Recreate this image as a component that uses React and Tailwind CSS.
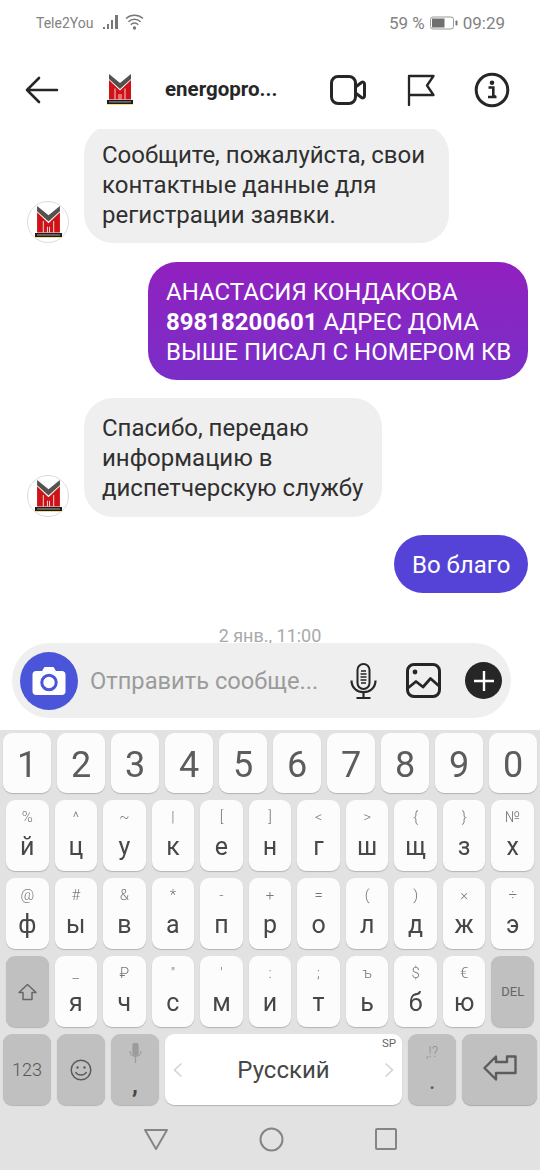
const Logo = ({ w = 26 }) => (
  <svg width={w} height={(w * 31) / 26} viewBox="0 0 26 31">
    <polygon points="2,0 13,9 24,0 24,5 13,15 2,5" fill="#55514f" />
    <polygon points="2,6 13,16.5 24,6 24,25.5 2,25.5" fill="#cf1118" />
    <path d="M8 25.5V14.5M18 25.5V14.5M12 25.5V20M14 25.5V20" fill="none" stroke="#fff" strokeWidth="0.8" />
    <rect x="0" y="26" width="26" height="4" fill="#1c1c1c" />
    <rect x="2" y="27.3" width="22" height="1.2" fill="#8a8a8a" />
    <rect x="0" y="30" width="26" height="1" fill="#f3e27a" />
  </svg>
);

const Avatar = () => (
  <div className="w-[42px] h-[42px] shrink-0 rounded-full border border-[#dcdcdc] bg-white flex items-center justify-center">
    <Logo w={27} />
  </div>
);

const Key = ({ top, main, children, gray, className = "" }) => (
  <div className={`relative flex-1 min-w-0 rounded-[9px] shadow-[0_1px_1px_#b4b4b4] flex flex-col items-center ${gray ? "bg-[#c0c0c0]" : "bg-[#fcfcfc]"} ${className}`}>
    {children}
    {top !== undefined && (
      <span className="h-[19px] mt-[8px] text-[15px] leading-[19px] font-light text-[#777] will-change-[opacity]">{top}</span>
    )}
    {main !== undefined && (
      <span className="mt-[5px] text-[25px] leading-[30px] text-[#474747] will-change-[opacity]">{main}</span>
    )}
  </div>
);

const rows = [
  [["%", "й"], ["^", "ц"], ["~", "у"], ["|", "к"], ["[", "е"], ["]", "н"], ["<", "г"], [">", "ш"], ["{", "щ"], ["}", "з"], ["№", "х"]],
  [["@", "ф"], ["#", "ы"], ["&", "в"], ["*", "а"], ["-", "п"], ["+", "р"], ["=", "о"], ["(", "л"], [")", "д"], ["×", "ж"], ["÷", "э"]],
];
const row4 = [["_", "я"], ["₽", "ч"], ['"', "с"], ["'", "м"], [":", "и"], [";", "т"], ["ъ", "ь"], ["$", "б"], ["€", "ю"]];

export default function App() {
  return (
    <div className="w-[540px] h-[1170px] bg-white overflow-hidden flex flex-col font-['Roboto',sans-serif]">
      {/* status */}
      <div className="h-[46px] shrink-0 flex items-center pl-[36px] text-[#828282]">
        <span className="text-[14px] leading-none">Tele2You</span>
        <svg className="ml-[10px]" width="41" height="20" viewBox="0 0 41 20">
          <rect x="0" y="14" width="2" height="2" fill="#777" />
          <rect x="4" y="11" width="2" height="5" fill="#777" />
          <rect x="8" y="7" width="2" height="9" fill="#777" />
          <rect x="12" y="2" width="3" height="14" fill="#777" />
          <path d="M23 5.5a13 13 0 0 1 17 0M25.4 8.7a9 9 0 0 1 12.2 0M27.8 11.7a5 5 0 0 1 7.4 0" fill="none" stroke="#777" strokeWidth="1.5" />
          <circle cx="31.5" cy="15" r="1.7" fill="#777" />
        </svg>
        <span className="ml-auto text-[17px] leading-none">59 %</span>
        <svg className="ml-[5px]" width="28" height="14" viewBox="0 0 28 14">
          <rect x="0.5" y="1" width="23" height="12" rx="2.5" fill="none" stroke="#999" />
          <rect x="2" y="2.5" width="12.5" height="9" fill="#6f6f6f" />
          <rect x="25.5" y="4.5" width="2" height="5" rx="0.8" fill="#777" />
        </svg>
        <span className="ml-[5px] mr-[35px] text-[17px] leading-none">09:29</span>
      </div>

      {/* header */}
      <div className="h-[83px] shrink-0 pt-[4px] flex items-center pl-[25px]">
        <svg width="34" height="28" viewBox="0 0 34 28" fill="none" stroke="#262626" strokeWidth="2.6" strokeLinecap="round" strokeLinejoin="round">
          <path d="M32 14H2M14 2L2 14L14 26" />
        </svg>
        <div className="ml-[48px] w-[26px]"><Logo w={26} /></div>
        <span className="ml-[32px] w-[165px] text-[20.5px] leading-none font-bold text-[#262626]">energopro...</span>
        <svg width="36" height="30" viewBox="0 0 36 30" fill="none" stroke="#262626" strokeWidth="3" strokeLinejoin="round">
          <rect x="1.5" y="1.5" width="24" height="27" rx="6.5" />
          <path d="M25.5 12L31.5 7.5C33 6.5 34.5 7.5 34.5 9V21C34.5 22.5 33 23.5 31.5 22.5L25.5 18" />
        </svg>
        <svg className="ml-[41px]" width="28" height="32" viewBox="0 0 28 32" fill="none" stroke="#262626" strokeWidth="2.3" strokeLinejoin="round" strokeLinecap="round">
          <path d="M2 31V2H26.5L20 11.5L26.5 21H2" />
        </svg>
        <svg className="ml-[39px]" width="36" height="36" viewBox="0 0 36 36" fill="none">
          <circle cx="18" cy="18" r="15.8" stroke="#262626" strokeWidth="3" />
          <circle cx="18" cy="10.8" r="2.3" fill="#262626" />
          <path d="M14.5 15.5H19.3V24.5H22M14 25H22.5" stroke="#262626" strokeWidth="2.6" />
        </svg>
      </div>

      {/* messages */}
      <div className="h-[514px] shrink-0 overflow-hidden flex flex-col justify-end text-[24px] leading-[30px]">
        <div className="flex items-end pl-[27px] gap-[15px] shrink-0">
          <Avatar />
          <div className="w-[365px] rounded-[29px] bg-[#efefef] px-[18px] pt-[15px] pb-[13px] text-[#303030] whitespace-nowrap">
            Сообщите, пожалуйста, свои<br />контактные данные для<br />регистрации заявки.
          </div>
        </div>
        <div className="self-end mr-[12px] mt-[19px] w-[380px] shrink-0 rounded-[29px] bg-gradient-to-b from-[#9120bf] to-[#7a2dc8] px-[18px] pt-[15px] pb-[13px] text-white whitespace-nowrap">
          АНАСТАСИЯ КОНДАКОВА<br /><b className="font-bold">89818200601</b> АДРЕС ДОМА<br />ВЫШЕ ПИСАЛ С НОМЕРОМ КВ
        </div>
        <div className="flex items-end pl-[27px] gap-[15px] mt-[18px] shrink-0">
          <Avatar />
          <div className="w-[298px] rounded-[29px] bg-[#efefef] px-[18px] pt-[15px] pb-[14px] text-[#303030] whitespace-nowrap">
            Спасибо, передаю<br />информацию в<br />диспетчерскую службу
          </div>
        </div>
        <div className="self-end mr-[12px] mt-[18px] w-[134px] shrink-0 rounded-[29px] bg-[#5543d7] px-[18px] pt-[15px] pb-[13px] text-white whitespace-nowrap">
          Во благо
        </div>
        <div className="mt-[32px] mb-[-4px] h-[22px] shrink-0 text-center text-[18px] leading-[22px] text-[#a9a9a9]">2 янв., 11:00</div>
      </div>

      {/* input */}
      <div className="relative ml-[12px] w-[499px] h-[75px] shrink-0 rounded-full bg-[#efefef] flex items-center pl-[8px]">
        <div className="w-[58px] h-[58px] rounded-full bg-[#4a55d9] flex items-center justify-center">
          <svg width="34" height="30" viewBox="0 0 34 30">
            <path d="M4 5H10L12.5 1H21.5L24 5H30C32 5 33.5 6.5 33.5 8.5V25.5C33.5 27.5 32 29 30 29H4C2 29 0.5 27.5 0.5 25.5V8.5C0.5 6.5 2 5 4 5Z" fill="#fff" />
            <circle cx="17" cy="16.5" r="7.2" fill="none" stroke="#4a55d9" strokeWidth="3" />
          </svg>
        </div>
        <span className="ml-[12px] mt-[2px] w-[260px] text-[23.7px] leading-none text-[#9b9b9b] whitespace-nowrap">Отправить сообще...</span>
        <svg width="27" height="36" viewBox="0 0 27 36" fill="none" stroke="#262626" strokeWidth="2">
          <rect x="7.5" y="1" width="12" height="25" rx="6" />
          <path d="M1.5 17.5C1.5 33 25.5 33 25.5 17.5M13.5 29V34.5M6.5 35H20.5" strokeWidth="2.2" />
          <path d="M11 8H16M10.5 11H16.5M10.5 14H16.5M10.5 17H16.5M11 20H16" strokeWidth="1.4" />
        </svg>
        <svg className="ml-[29px]" width="35" height="35" viewBox="0 0 35 35" fill="none" stroke="#262626" strokeWidth="3" strokeLinejoin="round">
          <rect x="1.5" y="1.5" width="32" height="32" rx="6.5" />
          <circle cx="9" cy="9" r="2.4" fill="#262626" stroke="none" />
          <path d="M2 25L10 18.5L17 24L24.5 15.5L33 23" strokeWidth="2.8" />
        </svg>
        <div className="ml-[24px] w-[37px] h-[37px] rounded-full bg-[#262626] flex items-center justify-center">
          <svg width="22" height="22" viewBox="0 0 22 22" stroke="#fff" strokeWidth="2.4"><path d="M11 1V21M1 11H21" /></svg>
        </div>
      </div>

      {/* keyboard */}
      <div className="mt-[12px] flex-1 bg-[#e2e2e2] flex flex-col">
        <div className="mt-[3px] h-[60px] px-[3px] flex gap-[6px]">
          {[1, 2, 3, 4, 5, 6, 7, 8, 9, 0].map((n) => (
            <Key key={n} className="justify-center pt-[3px]">
              <span className="text-[36px] leading-none text-[#5c5c5c] will-change-[opacity]">{n}</span>
            </Key>
          ))}
        </div>
        {rows.map((r, i) => (
          <div key={i} className="mt-[7px] h-[71px] px-[6px] flex gap-[6px]">
            {r.map(([t, m]) => <Key key={m} top={t} main={m} />)}
          </div>
        ))}
        <div className="mt-[7px] h-[71px] px-[6px] flex gap-[6px]">
          <Key gray className="justify-center">
            <svg width="19" height="18" viewBox="0 0 19 18" fill="none" stroke="#666" strokeWidth="1.5" strokeLinejoin="round"><path d="M9.5 1.5L18 9.5H14V16.5H5V9.5H1Z" /></svg>
          </Key>
          {row4.map(([t, m]) => <Key key={m} top={t} main={m} />)}
          <Key gray className="justify-center">
            <span className="text-[13px] leading-none text-[#666]">DEL</span>
          </Key>
        </div>
        <div className="mt-[7px] h-[71px] px-[3px] flex gap-[6px]">
          <Key gray className="justify-center">
            <span className="text-[18px] leading-none font-light text-[#555]">123</span>
          </Key>
          <Key gray className="justify-center">
            <svg width="22" height="22" viewBox="0 0 22 22" fill="none" stroke="#5c5c5c" strokeWidth="1.5">
              <circle cx="11" cy="11" r="9.8" />
              <circle cx="7.5" cy="8.5" r="1.2" fill="#5c5c5c" stroke="none" />
              <circle cx="14.5" cy="8.5" r="1.2" fill="#5c5c5c" stroke="none" />
              <path d="M5.5 13C7.5 17 14.5 17 16.5 13" />
            </svg>
          </Key>
          <Key gray>
            <svg className="mt-[9px]" width="13" height="20" viewBox="0 0 13 20" fill="none" stroke="#9c9c9c" strokeWidth="1.3">
              <rect x="4" y="0" width="5" height="12" rx="2.5" fill="#9c9c9c" />
              <path d="M1 8C1 15 12 15 12 8M6.5 14V20" />
            </svg>
            <span className="mt-[10px] text-[24px] leading-[24px] font-bold text-[#474747]">,</span>
          </Key>
          <div className="relative w-[237px] shrink-0 rounded-[9px] bg-white shadow-[0_1px_1px_#b4b4b4] flex items-center justify-between px-[8px]">
            <svg width="10" height="16" viewBox="0 0 10 16" fill="none" stroke="#d2d2d2" strokeWidth="1.5"><path d="M8.5 1.5L1.5 8L8.5 14.5" /></svg>
            <span className="text-[24px] leading-none text-[#474747]">Русский</span>
            <svg width="10" height="16" viewBox="0 0 10 16" fill="none" stroke="#d2d2d2" strokeWidth="1.5"><path d="M1.5 1.5L8.5 8L1.5 14.5" /></svg>
            <span className="absolute right-[6px] top-[4px] text-[11.5px] leading-none text-[#666]">SP</span>
          </div>
          <Key gray>
            <span className="mt-[11px] h-[29px] text-[14px] leading-[14px] font-light text-[#8f8f8f]">,!?</span>
            <span className="text-[18px] leading-[18px] font-bold text-[#555]">.</span>
          </Key>
          <div className="w-[75px] shrink-0 rounded-[9px] bg-[#c0c0c0] shadow-[0_1px_1px_#a8a8a8] flex items-center justify-center">
            <svg className="mb-[4px]" width="34" height="26" viewBox="0 0 34 26" fill="none" stroke="#5c5c5c" strokeWidth="2.4" strokeLinejoin="round">
              <path d="M13 1.5V7H24V1.5H32.5V18H13V24.5L1.5 13Z" />
            </svg>
          </div>
        </div>
        <div className="flex-1 flex items-center justify-center pt-[3px]">
          <svg width="26" height="23" viewBox="0 0 26 23" fill="none" stroke="#858585" strokeWidth="2" strokeLinejoin="round"><path d="M2 2H24L13 21Z" /></svg>
          <svg className="ml-[90px]" width="25" height="25" viewBox="0 0 25 25" fill="none" stroke="#858585" strokeWidth="2"><circle cx="12.5" cy="12.5" r="11" /></svg>
          <svg className="ml-[90px]" width="24" height="24" viewBox="0 0 24 24" fill="none" stroke="#858585" strokeWidth="2"><rect x="2" y="2" width="20" height="20" rx="1" /></svg>
        </div>
      </div>
    </div>
  );
}
